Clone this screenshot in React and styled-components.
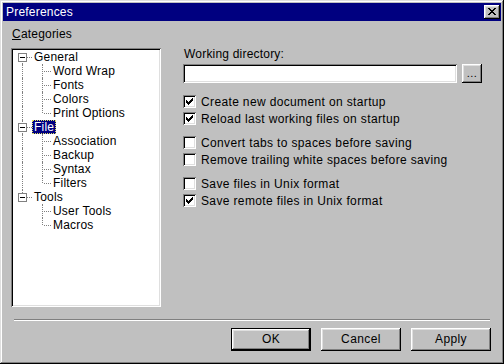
import React from "react";
import styled, { createGlobalStyle, css } from "styled-components";

const Global = createGlobalStyle`
  html, body { margin: 0; padding: 0; background: #c0c0c0; }
  body { font-family: "Liberation Sans", Arial, sans-serif; font-size: 12px; color: #000; }
  * { box-sizing: border-box; }
`;

const raised = css`
  box-shadow: inset -1px -1px #000, inset 1px 1px #fff, inset -2px -2px #808080, inset 2px 2px #dfdfdf;
`;
const sunken = css`
  box-shadow: inset 1px 1px #808080, inset -1px -1px #fff, inset 2px 2px #000, inset -2px -2px #dfdfdf;
`;

const Window = styled.div`
  width: 504px;
  height: 364px;
  background: #c0c0c0;
  padding: 3px;
  display: flex;
  flex-direction: column;
  box-shadow: inset -1px -1px #000, inset 1px 1px #dfdfdf, inset -2px -2px #808080, inset 2px 2px #fff;
  letter-spacing: 0.2px;
`;

const TitleBar = styled.div`
  height: 18px;
  background: #000080;
  color: #fff;
  display: flex;
  align-items: center;
  justify-content: space-between;
  padding: 0 1px 0 3px;
  font-size: 12px;
`;

const CloseButton = styled.div`
  width: 16px;
  height: 14px;
  background: #c0c0c0;
  ${raised};
  display: flex;
  align-items: center;
  justify-content: center;
  padding-bottom: 1px;
`;

const Body = styled.div`
  flex: 1;
  display: flex;
  flex-direction: column;
  padding: 6px 10px 0 8px;
`;

const MainRow = styled.div`
  display: flex;
  gap: 22px;
`;

const LeftColumn = styled.div`
  display: flex;
  flex-direction: column;
  width: 150px;
`;

const Label = styled.div`
  line-height: 14px;
  height: 14px;
  padding-left: ${(p) => p.$indent || 0}px;
  white-space: nowrap;
`;

const TreeBox = styled.div`
  margin-top: 7px;
  height: 259px;
  background: #fff;
  ${sunken};
  padding: 2px;
`;

const Row = styled.div`
  display: flex;
  height: 14px;
  align-items: stretch;
`;

const Cell = styled.div`
  position: relative;
  width: ${(p) => p.$w || 20}px;
  flex: none;
  ${(p) =>
    p.$vline &&
    css`
      &::before {
        content: "";
        position: absolute;
        left: 9px;
        top: ${p.$vTop || 0}px;
        bottom: ${p.$vBottom || 0}px;
        border-left: 1px dotted #808080;
      }
    `}
  ${(p) =>
    p.$hline &&
    css`
      &::after {
        content: "";
        position: absolute;
        left: ${p.$hStart || 10}px;
        right: 0;
        top: 7px;
        border-top: 1px dotted #808080;
      }
    `}
`;

const Expander = styled.div`
  position: absolute;
  left: 5px;
  top: 3px;
  width: 9px;
  height: 9px;
  background: #fff;
  border: 1px solid #808080;
  z-index: 1;
  &::after {
    content: "";
    position: absolute;
    left: 1px;
    top: 3px;
    width: 5px;
    height: 1px;
    background: #000;
  }
`;

const NodeLabel = styled.div`
  line-height: 14px;
  padding: 0 2px;
  white-space: nowrap;
  ${(p) =>
    p.$selected &&
    css`
      background: #000080;
      color: #fff;
      outline: 1px dotted #e0e060;
      outline-offset: -1px;
    `}
`;

const RightColumn = styled.div`
  flex: 1;
  display: flex;
  flex-direction: column;
  padding-top: 20px;
`;

const InputRow = styled.div`
  display: flex;
  margin-top: 3px;
  gap: 5px;
  height: 19px;
`;

const TextField = styled.div`
  width: 274px;
  height: 19px;
  background: #fff;
  ${sunken};
`;

const SmallButton = styled.div`
  width: 20px;
  height: 19px;
  background: #c0c0c0;
  ${raised};
  display: flex;
  align-items: center;
  justify-content: center;
  font-size: 11px;
  letter-spacing: 0.5px;
  padding-bottom: 2px;
`;

const Group = styled.div`
  display: flex;
  flex-direction: column;
  margin-top: ${(p) => p.$top}px;
`;

const CheckRow = styled.div`
  display: flex;
  align-items: center;
  height: 17px;
  gap: 5px;
  white-space: nowrap;
  letter-spacing: 0.36px;
`;

const CheckBox = styled.div`
  width: 13px;
  height: 13px;
  background: #fff;
  ${sunken};
  flex: none;
`;

const Separator = styled.div`
  margin-top: 12px;
  margin-left: 3px;
  margin-right: 1px;
  height: 2px;
  border-top: 1px solid #808080;
  border-bottom: 1px solid #fff;
`;

const ButtonRow = styled.div`
  margin-top: 7px;
  display: flex;
  justify-content: flex-end;
  gap: 10px;
`;

const Button = styled.div`
  width: 80px;
  height: 23px;
  background: #c0c0c0;
  display: flex;
  align-items: center;
  justify-content: center;
  padding-bottom: 1px;
  letter-spacing: 0.4px;
  ${(p) =>
    p.$default
      ? css`
          box-shadow: inset 0 0 0 1px #000, inset -2px -2px #000, inset 2px 2px #fff, inset -3px -3px #808080, inset 3px 3px #dfdfdf;
        `
      : raised};
`;

const Check = () => (
  <svg width="13" height="13" viewBox="0 0 13 13" shapeRendering="crispEdges">
    <path
      d="M3 5h1v3h-1z M4 6h1v3h-1z M5 7h1v3h-1z M6 6h1v3h-1z M7 5h1v3h-1z M8 4h1v3h-1z M9 3h1v3h-1z"
      fill="#000"
    />
  </svg>
);

const CloseGlyph = () => (
  <svg width="8" height="7" viewBox="0 0 8 7" shapeRendering="crispEdges">
    <path
      d="M0 0h2v1h-2z M6 0h2v1h-2z M1 1h2v1h-2z M5 1h2v1h-2z M2 2h4v1h-4z M3 3h2v1h-2z M2 4h4v1h-4z M1 5h2v1h-2z M5 5h2v1h-2z M0 6h2v1h-2z M6 6h2v1h-2z"
      fill="#000"
    />
  </svg>
);

const tree = [
  { label: "General", children: ["Word Wrap", "Fonts", "Colors", "Print Options"] },
  { label: "File", selected: true, children: ["Association", "Backup", "Syntax", "Filters"] },
  { label: "Tools", children: ["User Tools", "Macros"] },
];

const Tree = () => (
  <TreeBox>
    {tree.map((node, i) => {
      const first = i === 0;
      const last = i === tree.length - 1;
      return (
        <React.Fragment key={node.label}>
          <Row>
            <Cell $w={19} $vline $vTop={first ? 7 : 0} $vBottom={last ? 7 : 0} $hline $hStart={14}>
              <Expander />
            </Cell>
            <NodeLabel $selected={node.selected}>{node.label}</NodeLabel>
          </Row>
          {node.children.map((c, j) => (
            <Row key={c}>
              <Cell $w={20} $vline={!last} />
              <Cell
                $w={18}
                $vline
                $vBottom={j === node.children.length - 1 ? 7 : 0}
                $hline
                $hStart={11}
              />
              <NodeLabel>{c}</NodeLabel>
            </Row>
          ))}
        </React.Fragment>
      );
    })}
  </TreeBox>
);

const groups = [
  [
    ["Create new document on startup", true],
    ["Reload last working files on startup", true],
  ],
  [
    ["Convert tabs to spaces before saving", false],
    ["Remove trailing white spaces before saving", false],
  ],
  [
    ["Save files in Unix format", false],
    ["Save remote files in Unix format", true],
  ],
];

export default function App() {
  return (
    <>
      <Global />
      <Window>
        <TitleBar>
          <span>Preferences</span>
          <CloseButton>
            <CloseGlyph />
          </CloseButton>
        </TitleBar>
        <Body>
          <MainRow>
            <LeftColumn>
              <Label $indent={1}>
                <u>C</u>ategories
              </Label>
              <Tree />
            </LeftColumn>
            <RightColumn>
              <Label $indent={1}>Working directory:</Label>
              <InputRow>
                <TextField />
                <SmallButton>...</SmallButton>
              </InputRow>
              {groups.map((g, gi) => (
                <Group key={gi} $top={gi === 0 ? 10 : 7}>
                  {g.map(([text, checked]) => (
                    <CheckRow key={text}>
                      <CheckBox>{checked && <Check />}</CheckBox>
                      <span>{text}</span>
                    </CheckRow>
                  ))}
                </Group>
              ))}
            </RightColumn>
          </MainRow>
          <Separator />
          <ButtonRow>
            <Button $default>OK</Button>
            <Button>Cancel</Button>
            <Button>Apply</Button>
          </ButtonRow>
        </Body>
      </Window>
    </>
  );
}
